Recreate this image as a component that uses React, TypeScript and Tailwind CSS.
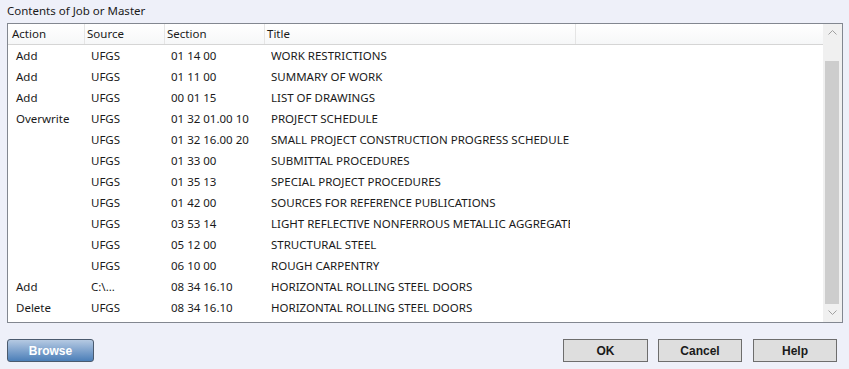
const rows: [string, string, string, string][] = [
  ['Add', 'UFGS', '01 14 00', 'WORK RESTRICTIONS'],
  ['Add', 'UFGS', '01 11 00', 'SUMMARY OF WORK'],
  ['Add', 'UFGS', '00 01 15', 'LIST OF DRAWINGS'],
  ['Overwrite', 'UFGS', '01 32 01.00 10', 'PROJECT SCHEDULE'],
  ['', 'UFGS', '01 32 16.00 20', 'SMALL PROJECT CONSTRUCTION PROGRESS SCHEDULE'],
  ['', 'UFGS', '01 33 00', 'SUBMITTAL PROCEDURES'],
  ['', 'UFGS', '01 35 13', 'SPECIAL PROJECT PROCEDURES'],
  ['', 'UFGS', '01 42 00', 'SOURCES FOR REFERENCE PUBLICATIONS'],
  ['', 'UFGS', '03 53 14', 'LIGHT REFLECTIVE NONFERROUS METALLIC AGGREGATE'],
  ['', 'UFGS', '05 12 00', 'STRUCTURAL STEEL'],
  ['', 'UFGS', '06 10 00', 'ROUGH CARPENTRY'],
  ['Add', 'C:\\...', '08 34 16.10', 'HORIZONTAL ROLLING STEEL DOORS'],
  ['Delete', 'UFGS', '08 34 16.10', 'HORIZONTAL ROLLING STEEL DOORS'],
];

const cols = 'grid grid-cols-[77px_80px_100px_311px_1fr]';

export default function App() {
  return (
    <div className="w-[849px] h-[369px] bg-[#eef0f9] px-[7px] font-['Noto_Sans',sans-serif] text-[11.5px] text-[#1a1a1a] flex flex-col">
      <div className="h-[23px] pt-[3px] leading-[16px]">Contents of Job or Master</div>

      {/* List frame */}
      <div className="h-[300px] w-[836px] border border-[#828790] bg-white flex">
        <div className="flex-1 flex flex-col overflow-hidden">
          <div className={`${cols} h-[21px] bg-gradient-to-b from-white to-[#f6f7f8] border-b border-[#d5d5d5] leading-[20px]`}>
            <div className="pl-[4px] border-r border-[#e5e5e5]">Action</div>
            <div className="pl-[2px] border-r border-[#e5e5e5]">Source</div>
            <div className="pl-[2px] border-r border-[#e5e5e5]">Section</div>
            <div className="pl-[2px] border-r border-[#e5e5e5]">Title</div>
            <div />
          </div>
          {rows.map((r, i) => (
            <div key={i} className={`${cols} h-[21px] leading-[21px] whitespace-nowrap`}>
              <div className="pl-[8px] overflow-hidden">{r[0]}</div>
              <div className="pl-[6px] overflow-hidden">{r[1]}</div>
              <div className="pl-[6px] overflow-hidden">{r[2]}</div>
              <div className="pl-[6px] pr-[6px]">
                <div className="overflow-hidden">{r[3]}</div>
              </div>
              <div />
            </div>
          ))}
        </div>

        {/* Scrollbar */}
        <div className="w-[19px] flex flex-col bg-[#f0f0f0] pr-[1px]">
          <div className="h-[37px] flex justify-center pt-[5px]">
            <svg width="9" height="6" viewBox="0 0 9 6" fill="none" stroke="#a0a0a0" strokeWidth="1">
              <path d="M0.5 5.5 L4.5 1.5 L8.5 5.5" />
            </svg>
          </div>
          <div className="flex-1 bg-[#cdcdcd] mx-[2px]" />
          <div className="h-[18px] flex justify-center items-center">
            <svg width="9" height="6" viewBox="0 0 9 6" fill="none" stroke="#a0a0a0" strokeWidth="1">
              <path d="M0.5 0.5 L4.5 4.5 L8.5 0.5" />
            </svg>
          </div>
        </div>
      </div>

      {/* Buttons */}
      <div className="flex items-center mt-[16px] font-['Liberation_Sans',Arial,sans-serif] font-bold text-[12px]">
        <button className="w-[87px] h-[23px] rounded-[3px] border border-[#4a5a6e] bg-gradient-to-b from-[#b5c9e2] to-[#4b7fb8] text-white">
          Browse
        </button>
        <div className="flex-1" />
        <button className="w-[85px] h-[23px] border border-[#6d6d6d] bg-[#dedede] text-[#1a1a1a]">OK</button>
        <button className="w-[84px] h-[23px] ml-[10px] border border-[#6d6d6d] bg-[#dedede] text-[#1a1a1a]">Cancel</button>
        <button className="w-[84px] h-[23px] ml-[11px] mr-[5px] border border-[#6d6d6d] bg-[#dedede] text-[#1a1a1a]">Help</button>
      </div>
    </div>
  );
}
